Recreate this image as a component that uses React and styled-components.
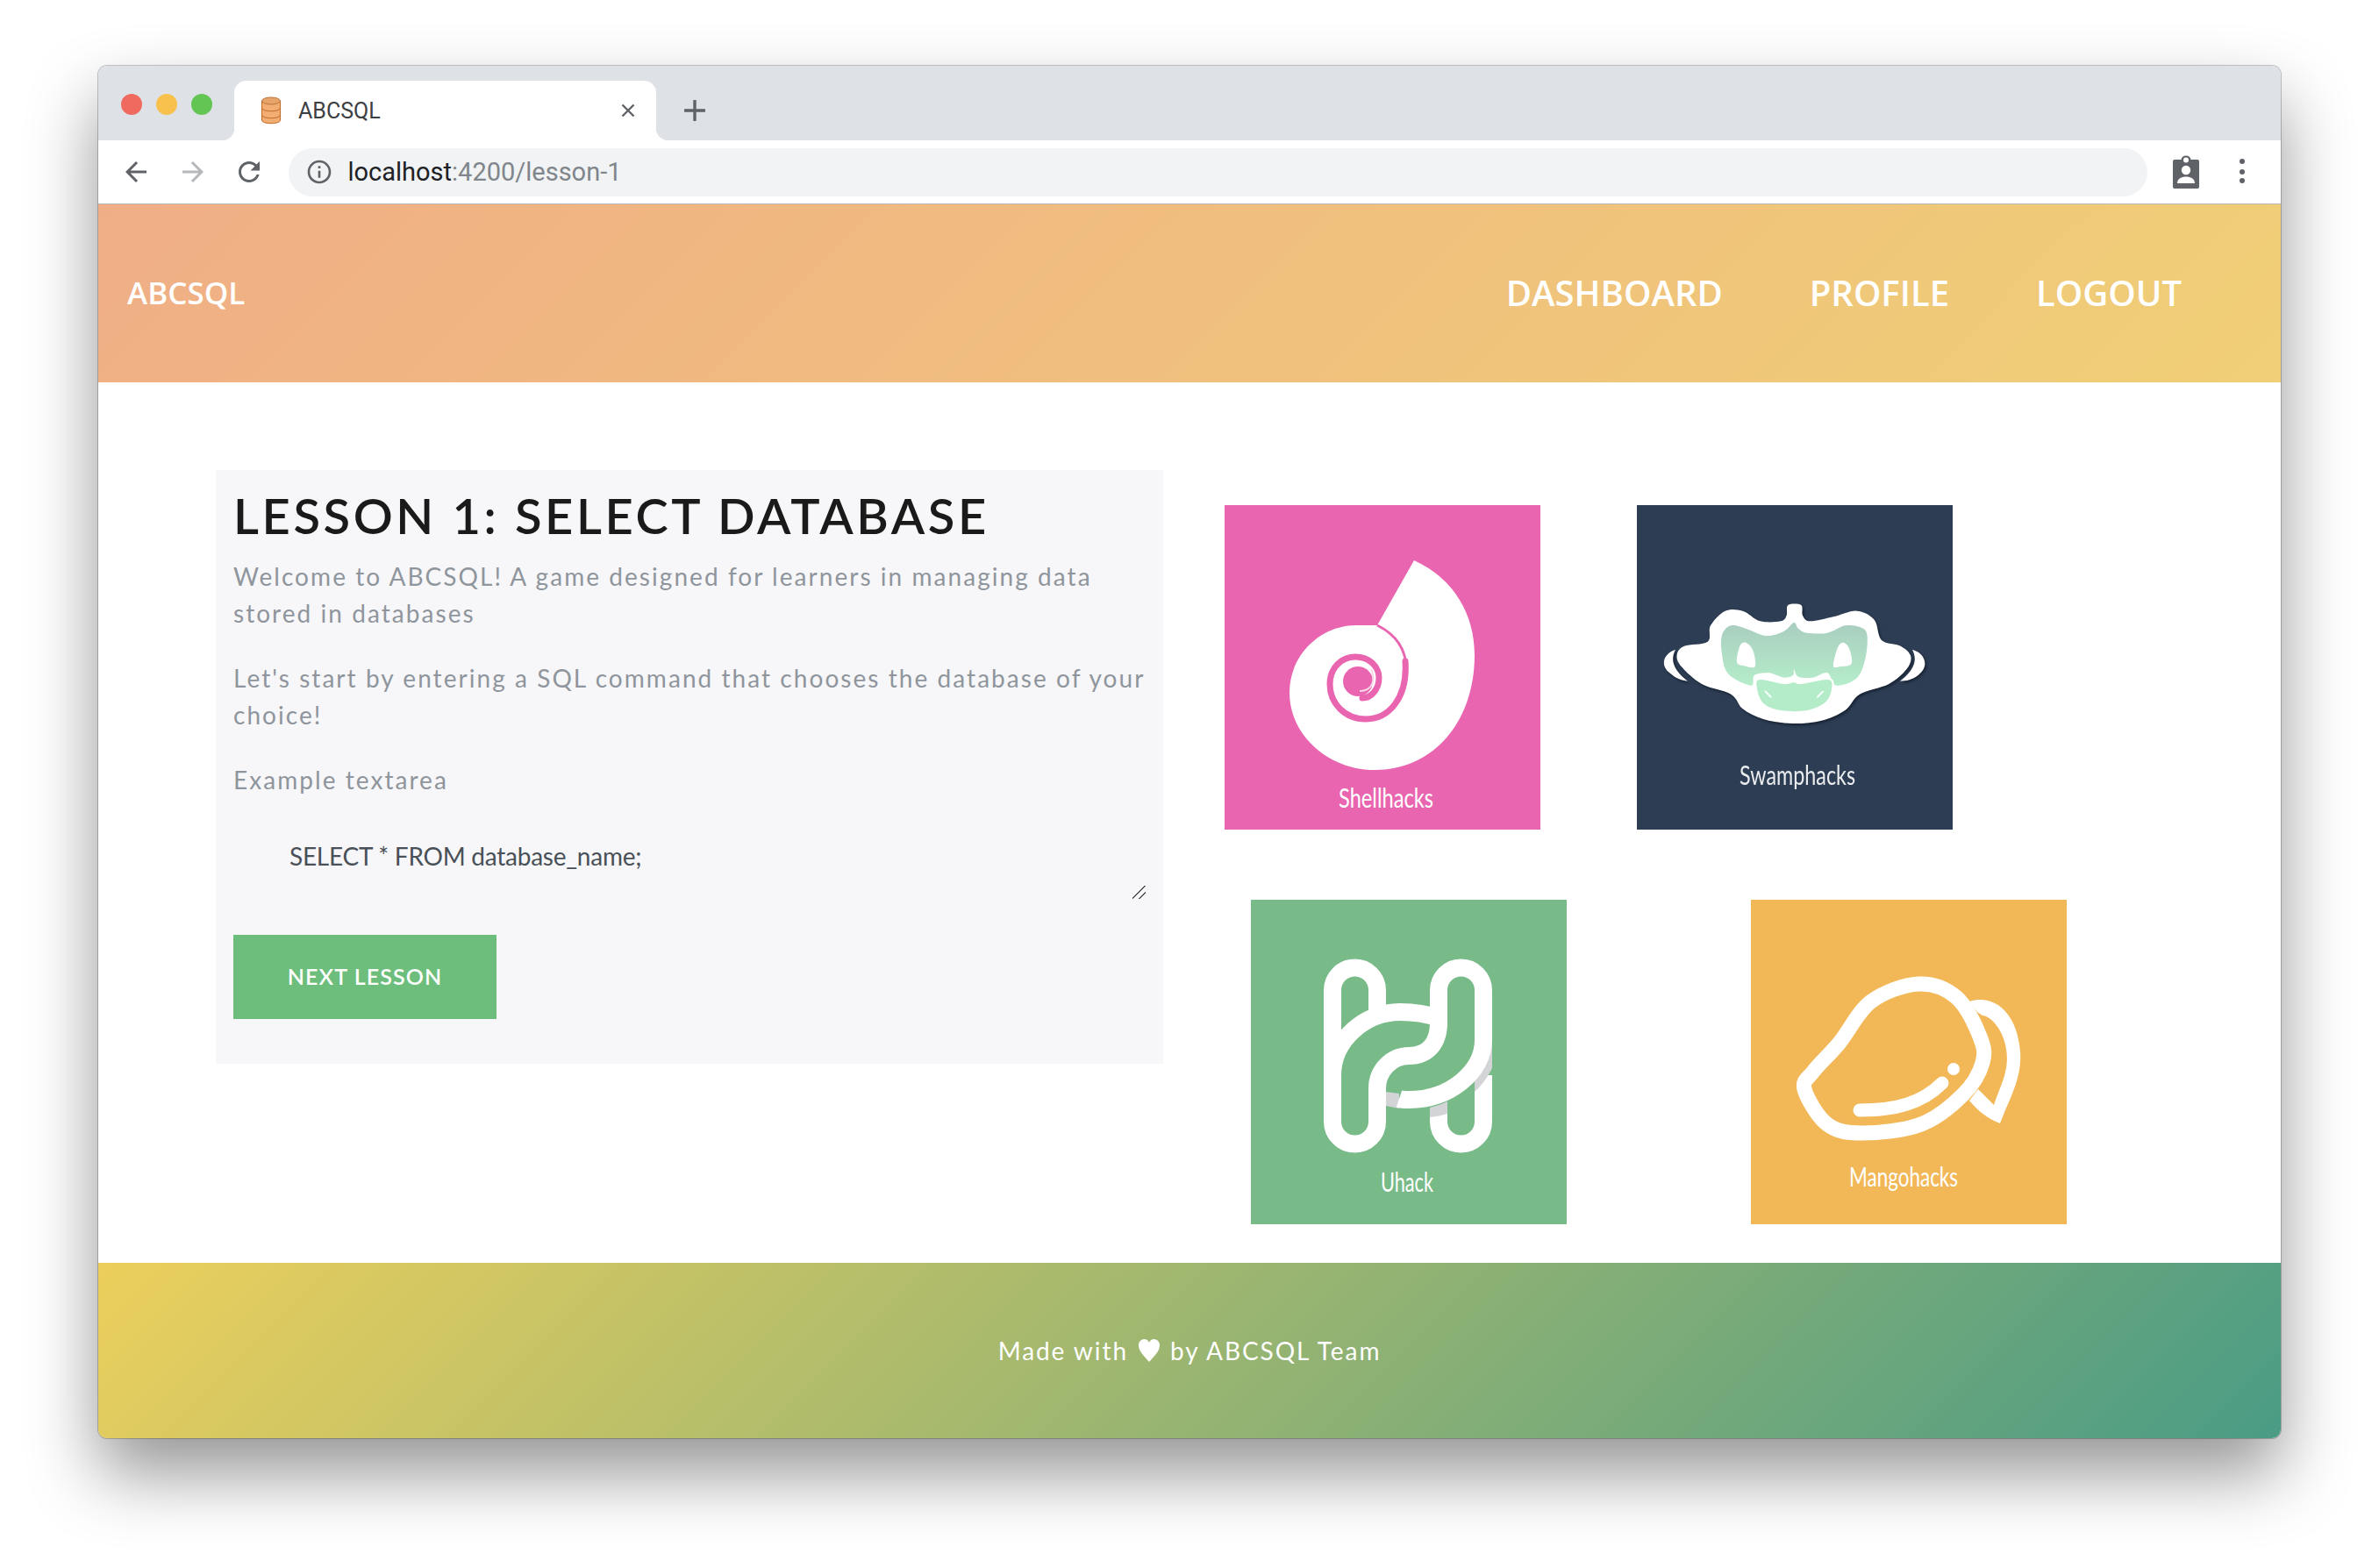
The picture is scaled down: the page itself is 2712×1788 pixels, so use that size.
import styled, { createGlobalStyle } from 'styled-components';

const GlobalStyle = createGlobalStyle`
  html, body {
    margin: 0;
    background: #fff;
  }
  * { box-sizing: border-box; }
`;

const Page = styled.div`
  width: 2712px;
  height: 1788px;
  padding: 75px 112px 0;
  overflow: hidden;
  background: #fff;
`;

const Window = styled.div`
  height: 1565px;
  border-radius: 10px;
  overflow: hidden;
  background: #fff;
  box-shadow: 0 0 0 1px rgba(0, 0, 0, 0.22), 0 40px 80px rgba(0, 0, 0, 0.42);
`;

const TabStrip = styled.div`
  height: 85px;
  padding-top: 17px;
  display: flex;
  background: #dee1e6;
`;

const Lights = styled.div`
  width: 155px;
  height: 54px;
  padding-left: 26px;
  display: flex;
  align-items: center;
  gap: 16px;
`;

const Light = styled.span`
  width: 24px;
  height: 24px;
  border-radius: 50%;
  background: ${(p) => p.$color};
`;

const Tab = styled.div`
  position: relative;
  width: 481px;
  height: 68px;
  padding: 0 24px 0 30px;
  display: flex;
  align-items: center;
  background: #fff;
  border-radius: 14px 14px 0 0;

  &::before, &::after {
    content: '';
    position: absolute;
    bottom: 0;
    width: 14px;
    height: 14px;
  }
  &::before {
    left: -14px;
    background: radial-gradient(circle at 0 0, #dee1e6 14px, #fff 14.5px);
  }
  &::after {
    right: -14px;
    background: radial-gradient(circle at 100% 0, #dee1e6 14px, #fff 14.5px);
  }
`;

const TabTitle = styled.span`
  flex: 1;
  margin-left: 19px;
  font: 400 25px Roboto, sans-serif;
  color: #3c4043;
`;

const NewTab = styled.div`
  width: 88px;
  height: 68px;
  display: flex;
  align-items: center;
  justify-content: center;
`;

const Toolbar = styled.div`
  height: 73px;
  padding-left: 11px;
  display: flex;
  align-items: center;
  background: #fff;
  border-bottom: 1px solid #b9b9b9;
`;

const NavButton = styled.div`
  width: 64.5px;
  display: flex;
  justify-content: center;
`;

const Omnibox = styled.div`
  flex: 1;
  height: 55px;
  margin-left: 12px;
  padding-left: 19px;
  display: flex;
  align-items: center;
  gap: 17px;
  border-radius: 28px;
  background: #f1f3f4;
`;

const Url = styled.span`
  font: 400 29px Roboto, sans-serif;
  color: #202124;
`;

const UrlRest = styled.span`
  color: #80868b;
`;

const ToolIcons = styled.div`
  width: 152px;
  padding: 0 41px 0 29px;
  display: flex;
  align-items: center;
  justify-content: space-between;
`;

const Header = styled.header`
  height: 203px;
  padding: 0 113px 3px 33px;
  display: flex;
  align-items: center;
  justify-content: space-between;
  background: linear-gradient(135deg, #f0ae86, #f0cf76);
  color: #fff;
  font-family: "Open Sans", sans-serif;
`;

const Brand = styled.a`
  font-size: 35px;
  font-weight: 600;
`;

const Nav = styled.nav`
  display: flex;
  gap: 99px;
`;

const NavLink = styled.a`
  font-size: 40px;
  font-weight: 600;
`;

const Main = styled.main`
  height: 1004px;
  padding: 100px 0 0 134px;
  display: flex;
  align-items: flex-start;
`;

const Card = styled.section`
  width: 1080px;
  padding: 18px 20px 51px;
  background: #f7f7fa;
  font-family: Lato, sans-serif;
`;

const Title = styled.h1`
  margin: 0 0 14px;
  font-size: 56px;
  font-weight: 600;
  line-height: 68px;
  letter-spacing: 3.6px;
  color: #1a1a1a;
  white-space: nowrap;
`;

const Text = styled.p`
  margin: 0 0 32px;
  font-size: 28px;
  line-height: 42px;
  letter-spacing: 2.05px;
  color: #8f959c;
  white-space: nowrap;
`;

const Label = styled.label`
  display: block;
  font-size: 28px;
  line-height: 42px;
  letter-spacing: 2.05px;
  color: #8f959c;
`;

const Field = styled.textarea`
  display: block;
  width: 1040px;
  height: 97px;
  margin: 18px 0 41px;
  padding: 27px 0 0 64px;
  border: 0;
  outline: 0;
  background: transparent;
  font: 400 28px/42px Lato, sans-serif;
  letter-spacing: -0.25px;
  color: #495057;

  &::-webkit-resizer {
    background: linear-gradient(135deg, transparent 0 46%, #555 46% 53%, transparent 53% 72%, #555 72% 79%, transparent 79%);
  }
`;

const NextButton = styled.button`
  display: block;
  width: 300px;
  height: 96px;
  padding: 0 0 2px;
  border: 0;
  background: #6dbe7c;
  color: #fff;
  font: 600 25px Lato, sans-serif;
  letter-spacing: 1.1px;
`;

const Gallery = styled.div`
  padding-top: 40px;
`;

const LogoRow = styled.div`
  display: flex;
  gap: ${(p) => p.$gap}px;
  padding-left: ${(p) => p.$left}px;
  margin-bottom: 80px;
`;

const Logo = styled.svg`
  display: block;
  width: 360px;
  height: 370px;
  background: ${(p) => p.$bg};
`;

const LogoName = styled.text`
  font: 400 30px Lato, sans-serif;
  fill: #fff;
`;

const Shadowed = styled.g`
  filter: drop-shadow(5px 6px 4px rgba(16, 26, 40, 0.75));
`;

const Footer = styled.footer`
  height: 200px;
  display: flex;
  align-items: center;
  justify-content: center;
  gap: 12px;
  background: linear-gradient(135deg, #eccf5c, #4a9c85);
  color: #fff;
  font: 400 28px Lato, sans-serif;
  letter-spacing: 1.93px;
`;

// closed smooth curve through the points, for the traced logo shapes
const smooth = (pts) => {
  const n = pts.length;
  let d = `M${pts[0][0]} ${pts[0][1]}`;
  for (let i = 0; i < n; i++) {
    const p0 = pts[(i - 1 + n) % n];
    const p1 = pts[i];
    const p2 = pts[(i + 1) % n];
    const p3 = pts[(i + 2) % n];
    const c1 = [p1[0] + (p2[0] - p0[0]) / 6, p1[1] + (p2[1] - p0[1]) / 6];
    const c2 = [p2[0] - (p3[0] - p1[0]) / 6, p2[1] - (p3[1] - p1[1]) / 6];
    d += `C${c1[0]} ${c1[1]} ${c2[0]} ${c2[1]} ${p2[0]} ${p2[1]}`;
  }
  return d + 'Z';
};

const Icon = ({ d, fill = '#5f6368', size = 36 }) => (
  <svg width={size} height={size} viewBox="0 0 24 24"><path d={d} fill={fill} /></svg>
);

const Favicon = () => (
  <svg width="24" height="32" viewBox="0 0 24 32">
    <path d="M1.5 5v22c0 5 21 5 21 0V5z" fill="#f2ad72" stroke="#c26a2a" />
    <ellipse cx="12" cy="5" rx="10.5" ry="4" fill="#e8a468" stroke="#b9763f" />
    <path d="M1.5 13c0 5 21 5 21 0M1.5 21c0 5 21 5 21 0" fill="none" stroke="#c26a2a" />
  </svg>
);

const CloseIcon = () => (
  <svg width="16" height="16" viewBox="0 0 16 16">
    <path d="M1.5 1.5l13 13M14.5 1.5l-13 13" stroke="#5f6368" strokeWidth="2.4" />
  </svg>
);

const PlusIcon = () => (
  <svg width="24" height="24" viewBox="0 0 24 24">
    <path d="M12 1v22M1 12h22" stroke="#5f6368" strokeWidth="3.4" strokeLinecap="round" />
  </svg>
);

const BadgeIcon = () => (
  <svg width="30" height="38" viewBox="0 0 30 38">
    <path d="M2 5h7.5a5.6 5.6 0 0 1 11 0H28a2 2 0 0 1 2 2v29a2 2 0 0 1-2 2H2a2 2 0 0 1-2-2V7a2 2 0 0 1 2-2z" fill="#5f6368" />
    <circle cx="15" cy="5.6" r="3" fill="#fff" />
    <circle cx="15" cy="17" r="5.2" fill="#fff" />
    <path d="M5 32c0-5.5 5-7.6 10-7.6s10 2.100 10 7.600z" fill="#fff" />
  </svg>
);

const DotsIcon = () => (
  <svg width="6" height="30" viewBox="0 0 6 30">
    <circle cx="3" cy="3" r="3" fill="#5f6368" />
    <circle cx="3" cy="15" r="3" fill="#5f6368" />
    <circle cx="3" cy="25" r="3" fill="#5f6368" />
  </svg>
);

const HeartIcon = () => (
  <svg width="24" height="26" viewBox="0 0 24 26">
    <path d="M12 26C6 19 0 14 0 7c0-4 3-7 6.500-7C9 0 11 1.500 12 4c1-2.500 3-4 5.500-4C21 0 24 3 24 7c0 7-6 12-12 19z" fill="#fff" />
  </svg>
);

const ShellLogo = () => (
  <Logo $bg="#e965b0" viewBox="0 0 360 370">
    <path d="M216 63C262 84 285 125 285 171C285 245 240 302 171 302C118 302 74 262 74 214C74 170 110 137 150 137L174 137Z" fill="#fff" />
    <path d="M174 137C196 148 207 165 207 187" fill="none" stroke="#e965b0" strokeWidth="3" />
    <path d="M206 178C209 220 187 244 161 244C137 244 120 226 120 204C120 186 133 173 149 173C165 173 176 184 176 197C176 210 167 220 157 220" fill="none" stroke="#e965b0" strokeWidth="7" strokeLinecap="round" />
    <circle cx="152" cy="201" r="17" fill="#e965b0" />
    <path d="M167 187C173 200 168 212 154 212" fill="none" stroke="#f9d8ea" strokeWidth="2" />
    <LogoName x="130" y="345" textLength="108" lengthAdjust="spacingAndGlyphs">Shellhacks</LogoName>
  </Logo>
);

const swampBody = [[445, 30], [490, 30], [495, 65], [520, 85], [600, 70], [680, 50], [740, 80], [765, 150], [830, 170], [865, 205], [850, 250], [790, 300], [690, 335], [640, 390], [560, 425], [460, 435], [360, 420], [290, 385], [250, 335], [150, 300], [80, 240], [65, 200], [90, 170], [170, 155], [180, 100], [230, 50], [290, 50], [350, 85], [420, 85], [440, 65]];
const swampMask = [[465, 90], [430, 120], [370, 135], [300, 110], [250, 100], [220, 130], [218, 190], [240, 265], [318, 305], [330, 270], [380, 262], [430, 278], [462, 270], [465, 250], [480, 275], [530, 278], [580, 262], [610, 305], [680, 280], [710, 210], [715, 130], [690, 105], [640, 100], [580, 125], [510, 125], [480, 110]];
const swampMuzzle = [[465, 295], [490, 300], [580, 285], [595, 310], [575, 360], [510, 390], [420, 390], [360, 365], [338, 310], [350, 285], [430, 300]];
const leftEye = [[270, 225], [280, 170], [300, 158], [325, 185], [332, 240], [295, 238]];
const rightEye = [[600, 238], [615, 175], [635, 158], [655, 180], [662, 230], [625, 240]];

const SwampLogo = () => (
  <Logo $bg="#2d3d53" viewBox="0 0 360 370">
    <defs>
      <linearGradient id="swampMint" x1="0" y1="0" x2="0" y2="1">
        <stop offset="0" stopColor="#a9cdbf" />
        <stop offset="1" stopColor="#b5edca" />
      </linearGradient>
    </defs>
    <g transform="translate(24 104) scale(.3333)">
      <Shadowed>
        <path d={smooth(swampBody)} fill="#fff" />
        <path d="M60 182C20 195 5 235 40 262C60 280 80 288 102 290C70 265 35 230 60 182Z" fill="#fff" />
        <path d="M870 182C915 195 930 240 890 270C870 285 850 290 828 290C860 265 895 230 870 182Z" fill="#fff" />
      </Shadowed>
      <path d={smooth(swampMask)} fill="url(#swampMint)" />
      <path d={smooth(swampMuzzle)} fill="#b4ebc9" stroke="#fff" strokeWidth="14" paintOrder="stroke" />
      <path d={smooth(leftEye)} fill="#fff" />
      <path d={smooth(rightEye)} fill="#fff" />
      <path d="M368 326L386 344M564 326L546 344" stroke="#fff" strokeWidth="6" strokeLinecap="round" />
    </g>
    <LogoName x="117" y="319" textLength="132" lengthAdjust="spacingAndGlyphs" opacity=".9">Swamphacks</LogoName>
  </Logo>
);

const UhackLogo = () => (
  <Logo $bg="#79ba89" viewBox="0 0 360 370">
    <g fill="none" stroke="#fff" strokeWidth="20">
      <path d="M214 240V253A25.500 25.500 0 0 0 265 253V200" />
      <path d="M93 220V103A25.500 25.500 0 0 1 144 103V128" />
    </g>
    <g fill="#d2d4d6">
      <path d="M154 219L169 221V238L154 235Z" />
      <path d="M204 237C211 235 218 233 224 230V244C218 246 211 247 204 248Z" />
      <path d="M275 162V192C270 202 264 211 255 219V206C264 194 271 178 275 162Z" />
    </g>
    <g fill="none" stroke="#fff" strokeWidth="20">
      <path d="M93 195V253A25.500 25.500 0 0 0 144 253V215C144 195 160 178 180 178C200 178 214 165 214 140V103A25.500 25.500 0 0 1 265 103V160C265 195 228 228 180 228C176 228 172 228 169 227" />
      <path d="M93 200C93 160 130 128 170 128C185 128 200 130 214 135" />
    </g>
    <LogoName x="148" y="333" textLength="60" lengthAdjust="spacingAndGlyphs">Uhack</LogoName>
  </Logo>
);

const MangoLogo = () => (
  <Logo $bg="#f2b858" viewBox="0 0 360 370">
    <g fill="none" stroke="#fff" strokeWidth="17">
      <path d={smooth([[61, 216], [71, 196], [101, 163], [137, 116], [191, 96], [234, 111], [261, 156], [264, 186], [242, 222], [194, 256], [127, 266], [87, 256]])} />
      <path d="M124 240C165 240 195 232 218 209" strokeWidth="15" strokeLinecap="round" />
    </g>
    <path d="M249 116C275 108 300 125 306 165C312 200 295 225 284 255C270 250 258 240 249 229L259 216L277 234C285 210 295 195 291 170C288 150 275 133 264 132L258 128Z" fill="#fff" />
    <circle cx="231" cy="193" r="7" fill="#fff" />
    <LogoName x="112" y="327" textLength="124" lengthAdjust="spacingAndGlyphs">Mangohacks</LogoName>
  </Logo>
);

const App = () => {
  return (
    <Page>
      <GlobalStyle />
      <Window>
        <TabStrip>
          <Lights>
            <Light $color="#f06a5f" />
            <Light $color="#f8c14d" />
            <Light $color="#62c554" />
          </Lights>
          <Tab>
            <Favicon />
            <TabTitle>ABCSQL</TabTitle>
            <CloseIcon />
          </Tab>
          <NewTab><PlusIcon /></NewTab>
        </TabStrip>

        <Toolbar>
          <NavButton><Icon d="M20 11H7.830l5.590-5.590L12 4l-8 8 8 8 1.410-1.410L7.830 13H20v-2z" /></NavButton>
          <NavButton><Icon fill="#b5b8bb" d="M4 11h12.170l-5.590-5.590L12 4l8 8-8 8-1.410-1.410L16.170 13H4v-2z" /></NavButton>
          <NavButton><Icon d="M17.650 6.350C16.200 4.900 14.210 4 12 4c-4.420 0-7.990 3.580-7.990 8s3.570 8 7.990 8c3.730 0 6.840-2.550 7.730-6h-2.080c-.82 2.330-3.040 4-5.650 4-3.310 0-6-2.690-6-6s2.690-6 6-6c1.660 0 3.140.69 4.220 1.780L13 11h7V4l-2.350 2.350z" /></NavButton>
          <Omnibox>
            <Icon size={32} d="M11 7h2v2h-2zm0 4h2v6h-2zm1-9C6.480 2 2 6.480 2 12s4.480 10 10 10 10-4.480 10-10S17.520 2 12 2zm0 18c-4.410 0-8-3.590-8-8s3.590-8 8-8 8 3.590 8 8-3.590 8-8 8z" />
            <Url>localhost<UrlRest>:4200/lesson-1</UrlRest></Url>
          </Omnibox>
          <ToolIcons>
            <BadgeIcon />
            <DotsIcon />
          </ToolIcons>
        </Toolbar>

        <Header>
          <Brand>ABCSQL</Brand>
          <Nav>
            <NavLink>DASHBOARD</NavLink>
            <NavLink>PROFILE</NavLink>
            <NavLink>LOGOUT</NavLink>
          </Nav>
        </Header>

        <Main>
          <Card>
            <Title>LESSON 1: SELECT DATABASE</Title>
            <Text>Welcome to ABCSQL! A game designed for learners in managing data<br />stored in databases</Text>
            <Text>Let's start by entering a SQL command that chooses the database of your<br />choice!</Text>
            <Label htmlFor="sql">Example textarea</Label>
            <Field id="sql" defaultValue="SELECT * FROM database_name;" />
            <NextButton>NEXT LESSON</NextButton>
          </Card>
          <Gallery>
            <LogoRow $left={70} $gap={110}>
              <ShellLogo />
              <SwampLogo />
            </LogoRow>
            <LogoRow $left={100} $gap={210}>
              <UhackLogo />
              <MangoLogo />
            </LogoRow>
          </Gallery>
        </Main>

        <Footer>
          <span>Made with</span>
          <HeartIcon />
          <span>by ABCSQL Team</span>
        </Footer>
      </Window>
    </Page>
  );
};

export default App;
